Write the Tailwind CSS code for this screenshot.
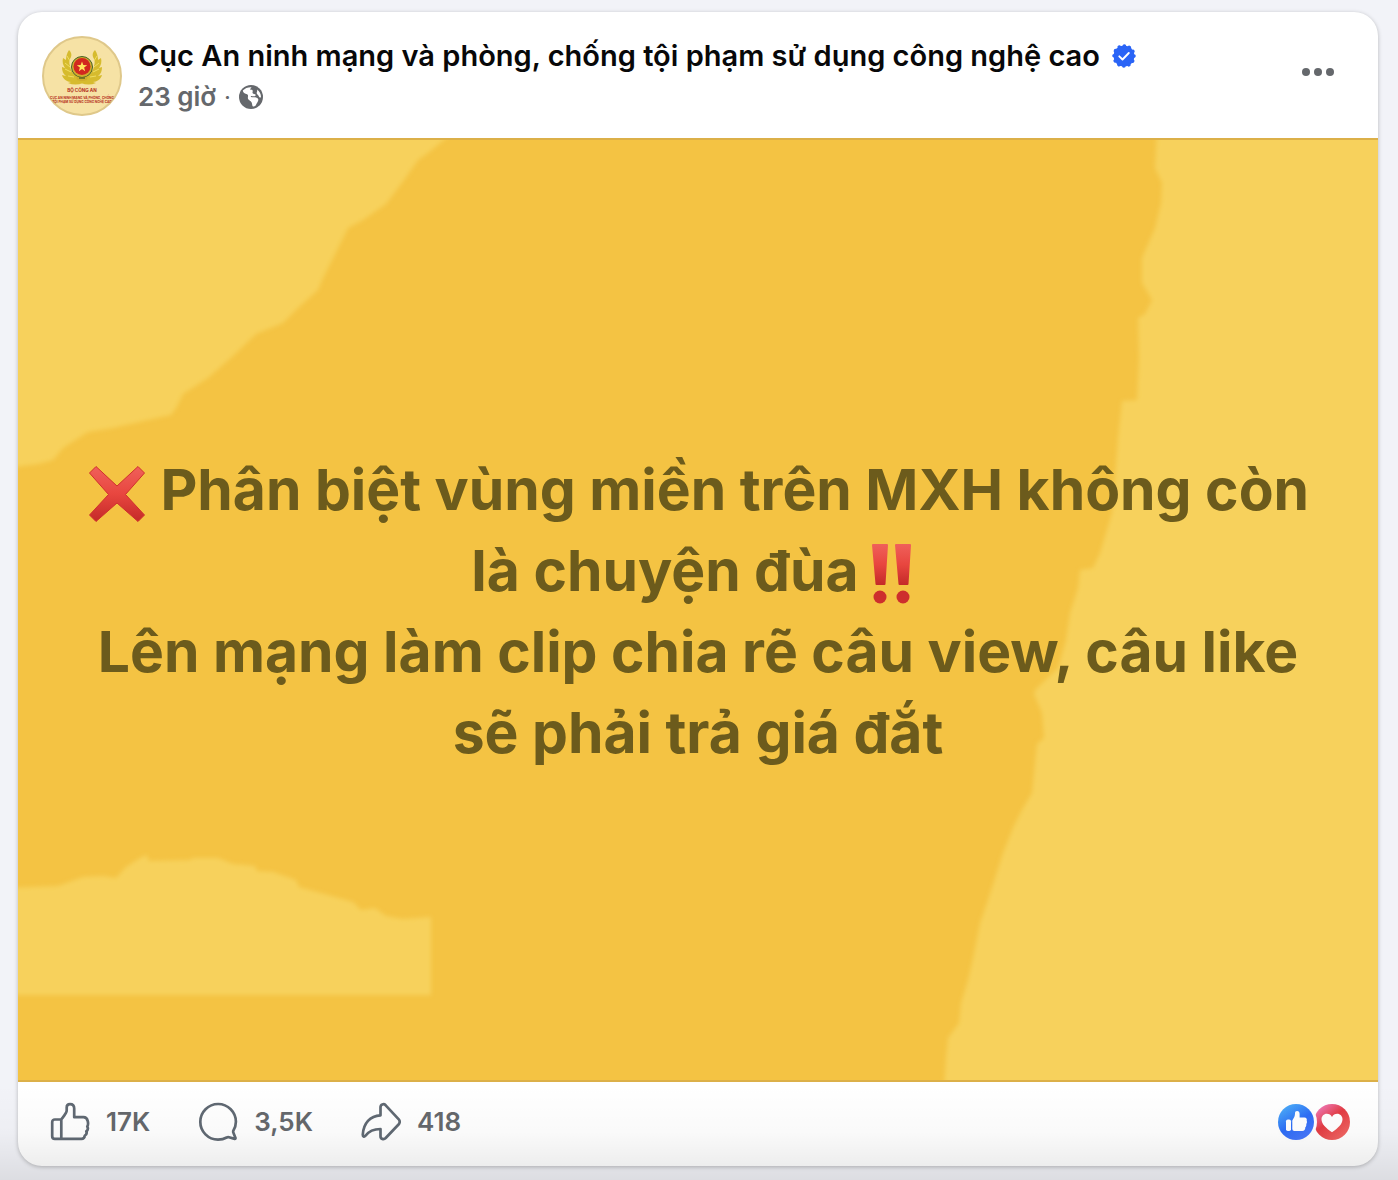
<!DOCTYPE html>
<html lang="vi">
  <head>
    <meta charset="UTF-8" />
    <meta name="viewport" content="width=device-width, initial-scale=1" />
    <title>Cục An ninh mạng và phòng, chống tội phạm sử dụng công nghệ cao</title>
    <script src="https://cdn.jsdelivr.net/npm/@tailwindcss/browser@4"></script>
  </head>
  <body class="relative min-h-screen bg-[#f2f3f8] pt-3 pr-5 pb-3.5 pl-[18px] font-['Inter','Liberation_Sans',sans-serif]">
    <article class="overflow-hidden rounded-3xl bg-white shadow-[0_1px_4px_rgba(0,0,0,0.25)]">
      <header class="flex items-start px-6 pt-6 pb-5">
        <a href="#" aria-label="Trang cá nhân" class="shrink-0">
          <svg class="size-20" viewBox="0 0 80 80">
            <defs>
              <clipPath id="avatarClip"><circle cx="40" cy="40" r="39" /></clipPath>
            </defs>
            <circle cx="40" cy="40" r="39" fill="#f6e2a5" stroke="#dfc88a" stroke-width="2" />
            <!-- wheat wreath -->
            <g fill="#d6bb2e">
              <path d="M27 14c2 2 3 4 2 7-2 3-2 6-1 9 1 6 5 10 11 12l2 5c-5 2-10 2-15 0l3-1c-4 0-8-3-9-7l4 1c-3-2-4-5-4-9l3 1c-2-3-3-6-2-10l3 2c0-4 1-7 3-10z" />
              <path d="M53 14c-2 2-3 4-2 7 2 3 2 6 1 9-1 6-5 10-11 12l-2 5c5 2 10 2 15 0l-3-1c4 0 8-3 9-7l-4 1c3-2 4-5 4-9l-3 1c2-3 3-6 2-10l-3 2c0-4-1-7-3-10z" />
            </g>
            <path d="M25 20l3 5M23 27l5 4M23 33l6 3M26 40l6 1M55 20l-3 5M57 27l-5 4M57 33l-6 3M54 40l-6 1" stroke="#f0de62" stroke-width="1" />
            <circle cx="40" cy="31" r="10.5" fill="#cfae2c" stroke="#476128" stroke-width="1" />
            <circle cx="40" cy="30.5" r="8.5" fill="#d2271f" />
            <path d="M40 25.5l1.300 3.600 3.900.1-3.100 2.400 1.100 3.700-3.200-2.200-3.200 2.200 1.100-3.700-3.100-2.400 3.900-.1z" fill="#ffe55c" />
            <path d="M34 40q6 3 12 0l-1 4q-5 2-10 0z" fill="#cfae2c" />
            <path d="M37 42h6" stroke="#5d6420" stroke-width="1.5" />
            <g clip-path="url(#avatarClip)" fill="#b5301c" font-weight="700" text-anchor="middle">
              <text x="40" y="56" font-size="4.600">BỘ CÔNG AN</text>
              <text x="40" y="63" font-size="3.200">CỤC AN NINH MẠNG VÀ PHÒNG, CHỐNG</text>
              <text x="40" y="67" font-size="3.200">TỘI PHẠM SỬ DỤNG CÔNG NGHỆ CAO</text>
            </g>
          </svg>
        </a>

        <div class="ml-4 min-w-0 flex-1">
          <h1 class="flex items-center text-[29px] leading-10 font-semibold text-[#080809]">
            <a href="#">Cục An ninh mạng và phòng, chống tội phạm sử dụng công nghệ cao</a>
            <svg class="ml-3 size-6 shrink-0" viewBox="0 0 24 24" role="img" aria-label="Đã xác minh">
              <circle cx="12" cy="12" r="10.5" fill="#2a64f6" />
              <circle cx="12" cy="12" r="10" fill="none" stroke="#2a64f6" stroke-width="3.6" stroke-linecap="round" stroke-dasharray="0.1 5.136" />
              <path d="M7.300 12.300l3.200 3.200 6.300-6.500" fill="none" stroke="#fff" stroke-width="1.9" stroke-linecap="round" stroke-linejoin="round" />
            </svg>
          </h1>
          <p class="flex items-center text-[26px] leading-[42px] font-semibold text-[#65686c]">
            <a href="#">23 giờ</a>
            <span class="mx-2 text-xl">·</span>
            <svg class="size-6" viewBox="0 0 24 24" role="img" aria-label="Công khai">
              <circle cx="12" cy="12" r="12" fill="#65686c" />
              <path d="M3.800 5.500C6 3.200 9 2 12.500 2.200 12.200 3.200 11 3.500 11.300 4.800 12.300 5 12.800 4.500 13.500 5.200 14.300 6.200 13 7.300 13.700 8.200 14.300 9 16 8.800 16.600 9.700 17 10.700 15.800 11.600 14.500 11.300 13.300 11 12.500 10.600 11.800 11.200 11.500 12 12.500 12.200 13.500 12.300 15.500 12.300 17.500 12.300 18.900 13.500 19.900 14.800 19 16.500 18 18 17 19.500 16.800 21.300 14.800 21.600 12.800 21.500 13.500 18.800 12.500 17.200 11.700 15.700 9.600 15.500 9 13.700 8.500 12 9.500 11 8.700 9.800 7.300 8.300 4.500 9 3.800 5.500z" fill="#fff" />
              <path d="M18 4.500c2.500 1.700 4 4.500 4 7.500l-.8.8c-1.200-.6-1.200-1.600-2-2.600-.7-.9-1.700-1.300-1.500-2.500.2-1.200.9-1.700.3-3.200z" fill="#fff" />
            </svg>
          </p>
        </div>

        <button type="button" aria-label="Thêm" class="mt-7 mr-5 flex h-4 items-center gap-1">
          <span class="size-2 rounded-full bg-[#65686c]"></span>
          <span class="size-2 rounded-full bg-[#65686c]"></span>
          <span class="size-2 rounded-full bg-[#65686c]"></span>
        </button>
      </header>

      <section class="relative flex min-h-[944px] items-center justify-center overflow-hidden border-y-2 border-[#dcb048] bg-[#f4c343]">
        <svg class="absolute inset-0 size-full" viewBox="0 0 1360 940" preserveAspectRatio="none" aria-hidden="true">
          <defs>
            <filter id="soften"><feGaussianBlur stdDeviation="2" /></filter>
          </defs>
          <g fill="#f7d15b" filter="url(#soften)">
            <polygon points="-10,-10 438,-10 427,-1 410,13 400,20 386,40 368,64 345,80 330,88 320,108 305,138 300,150 280,168 265,183 238,194 215,216 190,238 165,254 158,268 153,275 130,280 95,288 70,292 45,308 35,320 20,324 -10,328" />
            <polygon points="-10,748 40,746 65,737 85,736 98,738 108,727 122,718 129,715 131,721 172,720 175,718 200,718 215,724 237,726 239,731 255,732 278,740 281,747 310,755 335,762 343,770 357,768 368,776 385,779 413,777 413,855 -10,855" />
            <polygon points="1139,-10 1137,28 1144,43 1143,63 1137,88 1124,118 1124,143 1134,160 1127,174 1120,178 1121,218 1119,260 1104,261 1100,298 1097,338 1094,373 1082,413 1075,428 1062,430 1060,448 1052,473 1048,500 1040,528 1018,549 1016,554 1024,573 1026,598 1019,604 1017,623 1014,653 1005,668 995,688 985,713 977,738 970,760 962,783 955,818 950,840 943,863 941,883 930,898 928,918 926,950 1370,950 1370,-10" />
          </g>
        </svg>
        <p class="relative px-8 pt-0.5 text-center text-[57px] leading-[81px] font-bold text-[#6c5b1c]">
          <svg class="inline-block size-[60px] align-[-14px]" viewBox="0 0 60 60" role="img" aria-label="❌">
            <defs>
              <linearGradient id="redFade" x1="0" y1="0" x2="0" y2="1">
                <stop offset="0" stop-color="#f0605a" />
                <stop offset="0.5" stop-color="#e8463f" />
                <stop offset="1" stop-color="#c42a28" />
              </linearGradient>
            </defs>
            <path d="M9 2.500L30 22 51 2.500 57.500 9 38.500 30.500 57.500 51 51 57.500 30 39 9 57.500 2.500 51 21.500 30.500 2.500 9z" fill="url(#redFade)" stroke="#cf302c" stroke-width="1" stroke-linejoin="round" />
          </svg>
          Phân biệt vùng miền trên MXH không còn<br />
          là chuyện đùa<svg class="inline-block h-[62px] w-[66px] align-[-14px]" viewBox="0 0 66 62" role="img" aria-label="‼️">
            <g fill="url(#redFade)">
              <path d="M14 1h14q1 0 1 1l-2.500 39q0 1-1 1h-8q-1 0-1-1L13 2q0-1 1-1z" />
              <path d="M37 1h14q1 0 1 1l-2.500 39q0 1-1 1h-8q-1 0-1-1L36 2q0-1 1-1z" />
            </g>
            <circle cx="21" cy="54" r="6.5" fill="#cd2f2d" />
            <circle cx="44" cy="54" r="6.5" fill="#cd2f2d" />
          </svg><br />
          Lên mạng làm clip chia rẽ câu view, câu like<br />
          sẽ phải trả giá đắt
        </p>
      </section>

      <footer class="flex h-[84px] items-center justify-between pr-7 pb-1 pl-8">
        <div class="flex items-center gap-12 text-[26px] leading-8 font-semibold text-[#65686c]">
          <button type="button" aria-label="Thích" class="flex items-center gap-4">
            <svg class="size-10" viewBox="0 0 40 40" fill="none" stroke="#606973" stroke-width="2.7" stroke-linejoin="round" stroke-linecap="round">
              <path d="M11.300 17.500V36.800M11.300 17.500H4.800A2.600 2.600 0 0 0 2.200 20.100V34.200A2.600 2.600 0 0 0 4.800 36.800H31.500C33.500 36.800 34.600 35.600 34.800 33.600 36.500 32.600 37 31 36.300 29.400 38 28 38.300 26.300 37.300 24.500 38.600 22.600 38.500 15.200 33.500 15.200H24.200V6.500C24.200 3.700 22.500 2.200 20 2.200 17.700 2.200 16.700 3.500 16.700 5.500V8.500C16.700 11 13.500 14.500 11.300 17.500z" />
            </svg>
            <span>17K</span>
          </button>
          <button type="button" aria-label="Bình luận" class="flex items-center gap-4">
            <svg class="size-10" viewBox="0 0 40 40" fill="none" stroke="#606973" stroke-width="2.7" stroke-linejoin="round" stroke-linecap="round">
              <path d="M35.200 29C37 26.300 37.900 23.200 37.900 19.800A17.800 17.800 0 1 0 20 37.600C23.200 37.600 26.200 36.900 28.700 35.500Q29.800 35 31 35.300L36.700 36.900Q37.700 37 37.500 36L35.500 31Q35 30 35.200 29z" />
            </svg>
            <span>3,5K</span>
          </button>
          <button type="button" aria-label="Chia sẻ" class="flex items-center gap-4">
            <svg class="size-10" viewBox="0 0 40 40" fill="none" stroke="#606973" stroke-width="2.7" stroke-linejoin="round" stroke-linecap="round">
              <path d="M19.500 5.200C19.500 2.300 22.700 1.300 24.700 3.300L38 17.600Q39.400 19.800 38 22L24.700 36C22.700 38 19.500 37 19.500 34.200V27C12 27 8 29 4.500 33.700 3.200 35.300 1.700 34.700 1.800 32.500 2.500 21.500 9 13.800 19.500 13.300z" />
            </svg>
            <span>418</span>
          </button>
        </div>

        <a href="#" aria-label="Xem ai đã bày tỏ cảm xúc" class="flex">
          <svg class="h-10 w-[72px]" viewBox="0 0 72 40">
            <defs>
              <linearGradient id="likeFill" x1="0.2" y1="0.1" x2="0.7" y2="0.9">
                <stop offset="0" stop-color="#48a5f8" />
                <stop offset="0.55" stop-color="#2d6df6" />
                <stop offset="1" stop-color="#4476fa" />
              </linearGradient>
              <linearGradient id="loveFill" x1="0.15" y1="0.1" x2="0.8" y2="0.9">
                <stop offset="0" stop-color="#ee75b0" />
                <stop offset="0.45" stop-color="#e33c43" />
                <stop offset="1" stop-color="#ef6360" />
              </linearGradient>
            </defs>
            <circle cx="54" cy="20" r="18" fill="url(#loveFill)" />
            <path d="M54 30.300C48 26.300 43.500 22 43.500 17.300 43.500 14.200 45.800 11.800 48.800 11.800 51 11.800 53 13 54 15 55 13 57 11.800 59.200 11.800 62.200 11.800 64.500 14.200 64.500 17.300 64.500 22 60 26.300 54 30.300z" fill="#fff" />
            <circle cx="18" cy="20" r="21" fill="#fefefe" />
            <circle cx="18" cy="20" r="18" fill="url(#likeFill)" />
            <rect x="8" y="17.5" width="5" height="11.5" rx="1.8" fill="#fff" />
            <path d="M14.300 18.500C16 15.500 17 14.500 17 11.300 17 9.700 17.800 9 19 9 20.800 9 21.600 10.300 21.600 12V15.500H26.500C28.300 15.500 29.300 17 28.700 18.500 29.200 20 29 21 28.300 22 28.500 23.500 28.100 24.500 27.300 25.300 27.400 27.500 26.300 29 24.300 29H16.300Q14.300 29 14.300 27z" fill="#fff" />
          </svg>
        </a>
      </footer>
    </article>
    <!-- shade along the bottom edge -->
    <div class="pointer-events-none absolute inset-x-0 bottom-0 h-24 bg-linear-to-b from-black/0 via-black/2 to-black/9"></div>
  </body>
</html>
